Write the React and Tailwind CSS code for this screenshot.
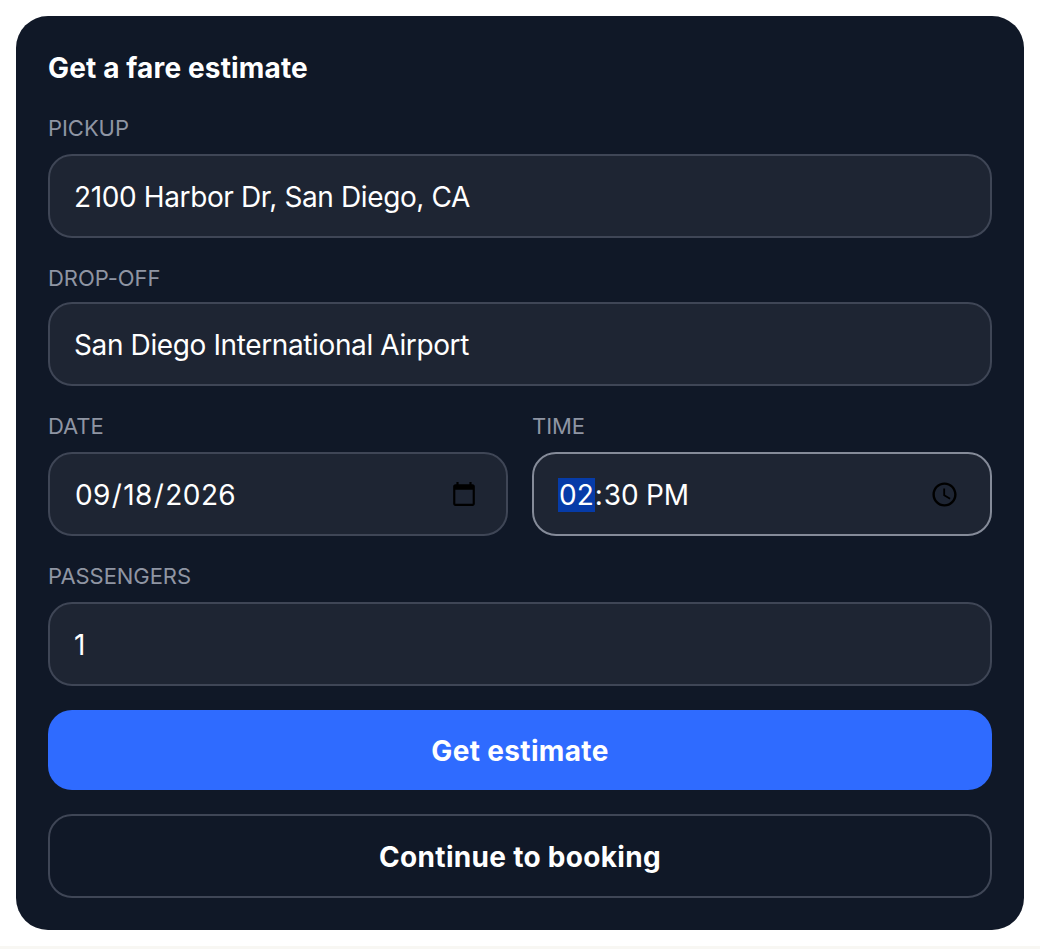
import React from "react";

const inputCls =
  "block w-full h-[84px] rounded-[24px] border-2 border-[#3f4656] bg-[#1e2533] px-6 pt-[2px] text-[28px] text-white outline-none font-['Inter',sans-serif] font-normal focus:border-[#858b99]";

function Field({ label, mb = "mb-[10px]", children }) {
  return (
    <div>
      <label className={`block h-8 ${mb} text-[22px] leading-8 tracking-[-0.05px] text-[#8f95a3] font-['Inter',sans-serif]`}>
        {label}
      </label>
      {children}
    </div>
  );
}

export default function App() {
  return (
    <div className="min-h-[949px] bg-white">
      <div className="h-[946px] bg-white px-4 pt-4">
        <div className="h-[914px] rounded-[32px] bg-[#101827] p-8 font-['Inter',sans-serif]">
          <h2 className="mb-6 text-[28px] leading-10 font-bold tracking-[0.15px] text-white">Get a fare estimate</h2>
          <div className="flex flex-col gap-6">
            <Field label="PICKUP">
              <input className={`${inputCls} tracking-[-0.38px]`} type="text" defaultValue="2100 Harbor Dr, San Diego, CA" />
            </Field>
            <Field label="DROP-OFF" mb="mb-2">
              <input className={`${inputCls} tracking-[-0.38px]`} type="text" defaultValue="San Diego International Airport" />
            </Field>
            <div className="grid grid-cols-2 gap-6">
              <Field label="DATE">
                <input
                  className={`${inputCls} tracking-[0.4px] [&::-webkit-calendar-picker-indicator]:mr-[2px]`}
                  type="date"
                  defaultValue="2026-09-18"
                />
              </Field>
              <Field label="TIME">
                <input
                  className={`${inputCls} [&::-webkit-calendar-picker-indicator]:mr-[4px]`}
                  type="time"
                  defaultValue="14:30"
                  autoFocus
                />
              </Field>
            </div>
            <Field label="PASSENGERS">
              <input className={inputCls} type="number" defaultValue="1" />
            </Field>
            <button className="h-20 rounded-[24px] bg-[#2f6bff] pt-[2px] text-[28px] font-bold tracking-[0.35px] text-white">Get estimate</button>
            <button className="h-[84px] rounded-[24px] border-2 border-[#3f4656] pt-[2px] text-[28px] font-bold tracking-[0.3px] text-white">Continue to booking</button>
          </div>
        </div>
      </div>
      <div className="h-[3px] bg-[#f8f7f3]" />
    </div>
  );
}
